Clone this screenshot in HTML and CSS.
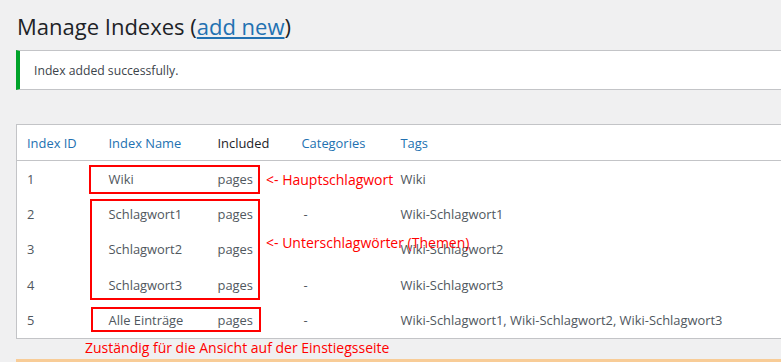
FILE: index.html
```html
<!DOCTYPE html>
<html lang="de">
<head>
    <meta charset="UTF-8">
    <title>Manage Indexes</title>
    <link rel="stylesheet" href="styles.css">
</head>
<body>
    <div class="wrap">
        <h1 class="page-title">Manage Indexes (<a href="#">add new</a>)</h1>

        <div class="notice">
            <p>Index added successfully.</p>
        </div>

        <table class="index-table">
            <thead>
                <tr>
                    <th class="col-id link">Index ID</th>
                    <th class="col-name link">Index Name</th>
                    <th class="col-inc">Included</th>
                    <th class="col-cat link">Categories</th>
                    <th class="col-tags link">Tags</th>
                </tr>
            </thead>
            <tbody>
                <tr>
                    <td>1</td>
                    <td>Wiki</td>
                    <td>pages</td>
                    <td></td>
                    <td>Wiki</td>
                </tr>
                <tr>
                    <td>2</td>
                    <td>Schlagwort1</td>
                    <td>pages</td>
                    <td class="dash">-</td>
                    <td>Wiki-Schlagwort1</td>
                </tr>
                <tr>
                    <td>3</td>
                    <td>Schlagwort2</td>
                    <td>pages</td>
                    <td></td>
                    <td>Wiki-Schlagwort2</td>
                </tr>
                <tr>
                    <td>4</td>
                    <td>Schlagwort3</td>
                    <td>pages</td>
                    <td class="dash">-</td>
                    <td>Wiki-Schlagwort3</td>
                </tr>
                <tr>
                    <td>5</td>
                    <td>Alle Einträge</td>
                    <td>pages</td>
                    <td class="dash">-</td>
                    <td>Wiki-Schlagwort1, Wiki-Schlagwort2, Wiki-Schlagwort3</td>
                </tr>
            </tbody>
        </table>

        <div class="notice-warning"></div>
    </div>

    <!-- annotations drawn over the screenshot -->
    <div class="mark mark-main"></div>
    <div class="mark mark-sub"></div>
    <div class="mark mark-all"></div>
    <span class="note note-main">&lt;- Hauptschlagwort</span>
    <span class="note note-sub">&lt;- Unterschlagwörter (Themen)</span>
    <span class="note note-all">Zuständig für die Ansicht auf der Einstiegsseite</span>
</body>
</html>
```

FILE: styles.css
```css
* {
    box-sizing: border-box;
}

body {
    margin: 0;
    background: #f0f0f1;
    color: #3c434a;
    font-family: "Open Sans", "Noto Sans", sans-serif;
    font-size: 13px;
    overflow: hidden;
    position: relative;
    height: 362px;
}

.wrap {
    padding: 0 0 0 16px;
}

.page-title {
    margin: 0;
    padding: 12px 0 0 1px;
    height: 50px;
    font-size: 22px;
    font-weight: 400;
    line-height: 29px;
    color: #1d2327;
}

.page-title a {
    color: #2271b1;
}

.notice {
    background: #fff;
    border: 1px solid #c3c4c7;
    border-left: 4px solid #00a32a;
    border-right: none;
    height: 40px;
    display: flex;
    align-items: center;
    padding-left: 14px;
    margin-right: -10px;
}

.notice p {
    margin: 0;
    font-size: 12.2px;
    color: #3c434a;
}

.index-table {
    margin-top: 34px;
    width: 800px;
    background: #fff;
    border: 1px solid #c3c4c7;
    border-right: none;
    border-collapse: collapse;
    font-size: 12.9px;
    color: #50575e;
}

.index-table th {
    text-align: left;
    font-weight: 400;
    height: 36px;
    padding: 0 10px;
    border-bottom: 1px solid #c3c4c7;
    color: #1d2327;
}

.index-table th.link {
    color: #2271b1;
}

.index-table td {
    height: 35.6px;
    padding: 0 10px;
    vertical-align: middle;
}

.col-id { width: 82px; }
.col-name { width: 109px; }
.col-inc { width: 84px; }
.col-cat { width: 99px; }

.index-table .dash {
    padding-left: 12px;
}

.notice-warning {
    margin-top: 20px;
    height: 4px;
    background: #f8cc97;
}

.mark {
    position: absolute;
    border: 2px solid #f00;
}

.mark-main {
    left: 89px;
    top: 165px;
    width: 171px;
    height: 29px;
}

.mark-sub {
    left: 90px;
    top: 199px;
    width: 170px;
    height: 101px;
}

.mark-all {
    left: 91px;
    top: 307px;
    width: 170px;
    height: 25px;
}

.note {
    position: absolute;
    color: #f00;
    font-size: 14px;
    line-height: 18px;
    white-space: nowrap;
}

.note-main {
    left: 266px;
    top: 171px;
}

.note-sub {
    left: 266px;
    top: 234px;
}

.note-all {
    left: 85px;
    top: 339px;
}
```
